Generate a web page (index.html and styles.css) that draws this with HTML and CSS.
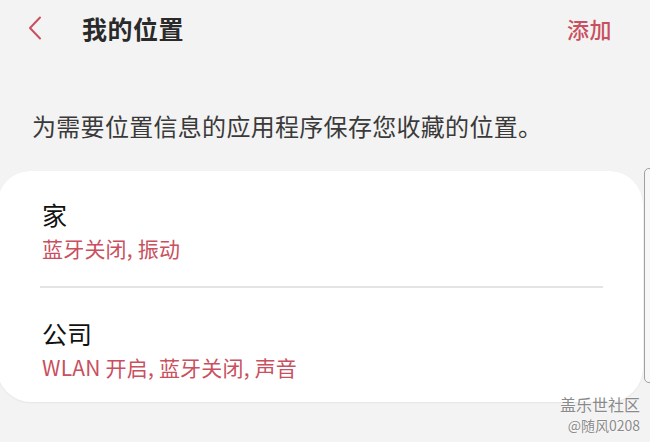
FILE: index.html
```html
<!DOCTYPE html>
<html lang="zh-CN">
<head>
<meta charset="utf-8">
<title>我的位置</title>
<link rel="stylesheet" href="styles.css">
</head>
<body>
<div class="screen">
  <header class="topbar">
    <svg class="back" width="14" height="24" viewBox="0 0 14 24" aria-hidden="true">
      <path d="M12 1.5 L2 12 L12 22.5" fill="none" stroke="#c9505e" stroke-width="2" stroke-linecap="round" stroke-linejoin="round"/>
    </svg>
    <h1 class="title">我的位置</h1>
    <span class="add">添加</span>
  </header>
  <p class="desc">为需要位置信息的应用程序保存您收藏的位置。</p>
  <section class="card">
    <div class="item item-first">
      <div class="item-name">家</div>
      <div class="item-sub">蓝牙关闭, 振动</div>
    </div>
    <div class="divider"></div>
    <div class="item item-last">
      <div class="item-name">公司</div>
      <div class="item-sub">WLAN 开启, 蓝牙关闭, 声音</div>
    </div>
  </section>
  <div class="scrollbar"></div>
  <div class="watermark">
    <div class="wm-main">盖乐世社区</div>
    <div class="wm-sub">@随风0208</div>
  </div>
</div>
</body>
</html>
```
FILE: styles.css
```css
html, body {
  margin: 0;
  padding: 0;
}
body {
  width: 650px;
  height: 442px;
  overflow: hidden;
  background: #f3f3f3;
  font-family: "Noto Sans CJK SC", "Noto Sans", sans-serif;
}
.screen {
  position: relative;
  width: 650px;
  height: 442px;
  overflow: hidden;
}
.topbar {
  display: flex;
  align-items: center;
  height: 56px;
  padding: 0 38px 0 28px;
}
.back {
  display: block;
  flex: none;
}
.title {
  margin: 0 0 0 40px;
  font-size: 25px;
  font-weight: 700;
  color: #2a2a2a;
  line-height: 32px;
  letter-spacing: 0.5px;
  flex: 1;
}
.add {
  font-size: 22px;
  font-weight: 500;
  color: #c9505e;
  line-height: 32px;
  letter-spacing: 0.5px;
}
.desc {
  margin: 54px 0 0 32px;
  font-size: 24px;
  letter-spacing: 0.3px;
  line-height: 32px;
  color: #3a3a3a;
}
.card {
  margin: 29px 7px 0 -3px;
  background: #ffffff;
  border-radius: 34px;
  box-shadow: 0 1px 2px rgba(0,0,0,0.06);
}
.item {
  padding-left: 45px;
}
.item-first {
  padding-top: 25px;
  padding-bottom: 22px;
}
.item-last {
  padding-top: 27px;
  padding-bottom: 19px;
}
.item-name {
  font-size: 25px;
  line-height: 36px;
  color: #111111;
}
.item-sub {
  font-size: 21px;
  line-height: 32px;
  letter-spacing: 0.2px;
  color: #c9505e;
}
.divider {
  height: 2px;
  margin: 0 40px 0 43px;
  background: #e4e4e4;
}
.scrollbar {
  position: absolute;
  left: 644px;
  top: 168px;
  width: 10px;
  height: 215px;
  box-sizing: border-box;
  border: 1.5px solid #a0a0a0;
  border-radius: 6px;
  background: #f7f7f7;
}
.watermark {
  position: absolute;
  right: 10px;
  top: 394px;
  text-align: right;
  color: #8a8a8a;
  text-shadow: 0 0 1px #fff, 0 0 2px #fff;
}
.wm-main {
  font-size: 16px;
  line-height: 21px;
}
.wm-sub {
  font-size: 14px;
  line-height: 20px;
}
```
